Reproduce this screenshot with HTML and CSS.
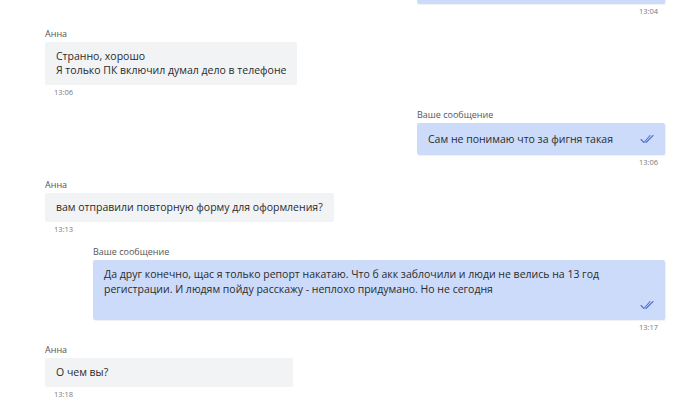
FILE: index.html
```html
<!DOCTYPE html>
<html lang="ru">
<head>
    <meta charset="UTF-8">
    <meta name="viewport" content="width=device-width, initial-scale=1.0">
    <title>Переписка</title>
    <link rel="stylesheet" href="styles.css">
</head>
<body>

    <div class="chat">

        <!-- previous message, cut off at the top -->
        <div class="group out first">
            <div class="bubble empty"></div>
            <div class="time">13:04</div>
        </div>

        <div class="group in">
            <div class="name">Анна</div>
            <div class="bubble">
                <span class="text">Странно, хорошо<br>Я только ПК включил думал дело в телефоне</span>
            </div>
            <div class="time">13:06</div>
        </div>

        <div class="group out">
            <div class="name">Ваше сообщение</div>
            <div class="bubble">
                <span class="text">Сам не понимаю что за фигня такая</span>
                <svg class="check" viewBox="0 0 15 10"><polyline points="1,5.5 4,8.5 10,1.5"/><polyline points="6,8.5 13,1.5"/></svg>
            </div>
            <div class="time">13:06</div>
        </div>

        <div class="group in">
            <div class="name">Анна</div>
            <div class="bubble">
                <span class="text">вам отправили повторную форму для оформления?</span>
            </div>
            <div class="time">13:13</div>
        </div>

        <div class="group out">
            <div class="name">Ваше сообщение</div>
            <div class="bubble long">
                <span class="text">Да друг конечно, щас я только репорт накатаю. Что б акк заблочили и люди не велись на 13 год регистрации. И людям пойду расскажу - неплохо придумано. Но не сегодня</span>
                <svg class="check" viewBox="0 0 15 10"><polyline points="1,5.5 4,8.5 10,1.5"/><polyline points="6,8.5 13,1.5"/></svg>
            </div>
            <div class="time">13:17</div>
        </div>

        <div class="group in">
            <div class="name">Анна</div>
            <div class="bubble">
                <span class="text">О чем вы?</span>
            </div>
            <div class="time">13:18</div>
        </div>

    </div>

</body>
</html>
```

FILE: styles.css
```css
body {
    margin: 0;
    background-color: #fff;
    font-family: "Open Sans", "Noto Sans", sans-serif;
    color: #2a2b2c;
    overflow: hidden;
}

/* Chat column */
.chat {
    margin-left: 45px;
    width: 620px;
    display: flex;
    flex-direction: column;
}

.group {
    display: flex;
    flex-direction: column;
    align-items: stretch;
    max-width: 572px;
    margin-bottom: 11px;
}

.group.first {
    margin-top: -28px;
}

.group.in {
    align-self: flex-start;
}

.group.out {
    align-self: flex-end;
}

.name {
    font-size: 9px;
    line-height: 12px;
    color: #555;
    margin-bottom: 2px;
}

/* Bubbles */
.bubble {
    box-sizing: border-box;
    min-width: 248px;
    font-size: 10.5px;
    line-height: 14px;
    border-radius: 2px;
}

.bubble.empty {
    height: 32px;
}

.group.in .bubble {
    background-color: #f2f3f5;
    padding: 7px 11px 8px;
}

.group.out .bubble {
    background-color: #ccdbf9;
    padding: 9px 10px 9px 11px;
    display: flex;
    align-items: center;
    justify-content: space-between;
    gap: 20px;
    box-shadow: 1px 1px 1px rgba(0, 0, 0, 0.06);
}

.group.out .bubble.long {
    flex-direction: column;
    align-items: stretch;
    gap: 3px;
    padding: 7px 10px 10px 11px;
}

.bubble.long .text {
    line-height: 15px;
}

.bubble.long .check {
    align-self: flex-end;
}

.check {
    width: 15px;
    height: 10px;
    flex-shrink: 0;
    fill: none;
    stroke: #4f72d4;
    stroke-width: 1.1;
    stroke-linecap: round;
    stroke-linejoin: round;
}

.time {
    font-size: 7.5px;
    line-height: 12px;
    color: #7a7a7a;
    margin-top: 1px;
}

.group.in .time {
    padding-left: 9px;
}

.group.out .time {
    text-align: right;
    padding-right: 7px;
}
```
